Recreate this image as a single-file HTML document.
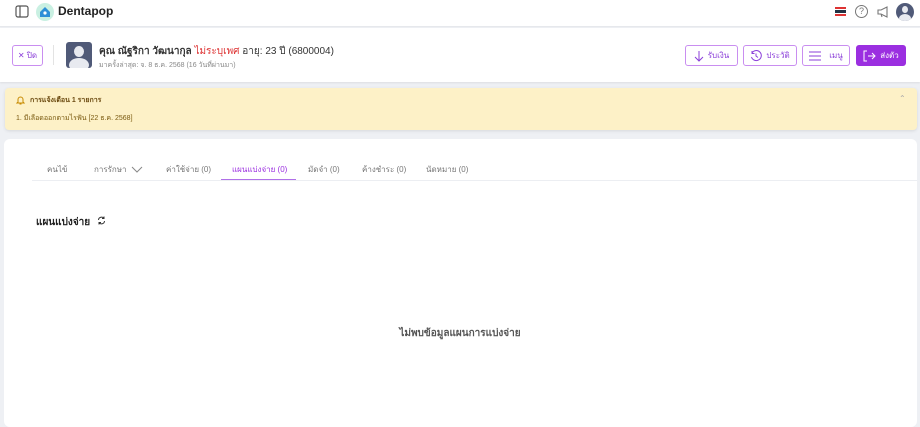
<!DOCTYPE html>
<html><head><meta charset="utf-8"><style>
*{box-sizing:border-box;margin:0;padding:0}
body{width:920px;height:427px;overflow:hidden;background:#eef0f4;font-family:"Liberation Sans","Noto Sans CJK SC",sans-serif;color:#333;position:relative}
.abs{position:absolute}
.top{left:0;top:0;width:920px;height:27px;background:#fff;border-bottom:1px solid #e6e8ec}
.hdr{left:0;top:28px;width:920px;height:54px;background:#fff;box-shadow:0 1px 2px rgba(0,0,0,.08)}
.btn{position:absolute;top:45px;height:21px;border:1px solid #c98ef0;border-radius:3px;background:#fff;font-size:8px;color:#8b3fd9;display:flex;align-items:center;justify-content:center;gap:4px}
.alert{left:5px;top:88px;width:912px;height:42px;background:#fdf1c7;border-radius:4px;box-shadow:0 1px 3px rgba(0,0,0,.1)}
.card{left:4px;top:139px;width:913px;height:288px;background:#fff;border-radius:6px}
.tab{position:absolute;top:163px;font-size:8px;color:#777}
</style></head><body>
<div class="abs top"></div>
<svg class="abs" style="left:15px;top:5px" width="14" height="13"><rect x="1" y="1" width="12" height="11" rx="2" fill="none" stroke="#555" stroke-width="1.2"/><line x1="5" y1="1" x2="5" y2="12" stroke="#555" stroke-width="1.2"/></svg>
<div class="abs" style="left:36px;top:3px;width:18px;height:18px;border-radius:50%;background:#c9f0e2"></div>
<svg class="abs" style="left:39px;top:6px" width="12" height="11"><path d="M1 6L6 1l5 5v5H1z" fill="#2d8fd6"/><circle cx="6" cy="7" r="1.6" fill="#fff"/></svg>
<div class="abs" style="left:58px;top:4px;font-size:12px;font-weight:bold;color:#222">Dentapop</div>
<div class="abs" style="left:835px;top:7px;width:11px;height:9px;background:linear-gradient(#d33 0 22%,#fff 22% 36%,#234 36% 64%,#fff 64% 78%,#d33 78%)"></div>
<div class="abs" style="left:855px;top:5px;width:13px;height:13px;border:1px solid #777;border-radius:50%;font-size:9px;text-align:center;line-height:11px;color:#777">?</div>
<svg class="abs" style="left:877px;top:5px" width="13" height="13"><path d="M1 5h3l6-3v10L4 9H1zM4 9l1 3" fill="none" stroke="#777" stroke-width="1.1"/></svg>
<div class="abs" style="left:896px;top:3px;width:18px;height:18px;border-radius:50%;background:#505a78;overflow:hidden"><div style="position:absolute;left:6px;top:3px;width:6px;height:7px;border-radius:50%;background:#e8eaf0"></div><div style="position:absolute;left:3px;top:11px;width:12px;height:9px;border-radius:50%;background:#e8eaf0"></div></div>

<div class="abs hdr"></div>
<div class="btn" style="left:12px;width:31px;">✕ ปิด</div>
<div class="abs" style="left:53px;top:45px;width:1px;height:20px;background:#e3e3e3"></div>
<div class="abs" style="left:66px;top:42px;width:26px;height:26px;border-radius:3px;background:#505a78;overflow:hidden"><div style="position:absolute;left:8px;top:4px;width:10px;height:11px;border-radius:50%;background:#e8eaf0"></div><div style="position:absolute;left:3px;top:16px;width:20px;height:14px;border-radius:50%;background:#e8eaf0"></div></div>
<div class="abs" style="left:99px;top:44px;font-size:10px;white-space:nowrap"><b>คุณ ณัฐริกา วัฒนากุล</b> <span style="color:#d33">ไม่ระบุเพศ</span> อายุ: 23 ปี (6800004)</div>
<div class="abs" style="left:99px;top:60px;font-size:7px;color:#888;white-space:nowrap">มาครั้งล่าสุด: จ. 8 ธ.ค. 2568 (16 วันที่ผ่านมา)</div>
<div class="btn" style="left:685px;width:53px"><svg width="10" height="12"><path d="M5 1v10M1 7l4 4 4-4" fill="none" stroke="#8b3fd9" stroke-width="1"/></svg>รับเงิน</div>
<div class="btn" style="left:743px;width:54px"><svg width="12" height="12"><path d="M2 3A5 5 0 1 1 1.5 7M2 1v2.5h2.5M6 3.5V6l2 1.5" fill="none" stroke="#8b3fd9" stroke-width="1"/></svg>ประวัติ</div>
<div class="btn" style="left:802px;width:48px;gap:8px"><svg width="12" height="10"><path d="M0 1h12M0 5h12M0 9h12" stroke="#8b3fd9" stroke-width="1"/></svg>เมนู</div>
<div class="btn" style="left:856px;width:50px;background:#9b2fe0;border-color:#9b2fe0;color:#fff"><svg width="13" height="12"><path d="M4 1H1v10h3M5 6h7M9 3l3 3-3 3" fill="none" stroke="#fff" stroke-width="1"/></svg>ส่งตัว</div>

<div class="abs alert"></div>
<svg class="abs" style="left:16px;top:95px" width="9" height="10"><path d="M2 7V4.5a2.5 2.5 0 0 1 5 0V7l1 1H1zM3.5 9h2" fill="none" stroke="#c88a00" stroke-width="1"/></svg>
<div class="abs" style="left:30px;top:95px;font-size:7px;font-weight:bold;color:#6b4a10">การแจ้งเตือน 1 รายการ</div>
<div class="abs" style="left:16px;top:113px;font-size:7px;color:#7a5a10">1. มีเลือดออกตามไรฟัน [22 ธ.ค. 2568]</div>
<div class="abs" style="left:899px;top:94px;font-size:8px;color:#aaa">⌃</div>

<div class="abs card"></div>
<div class="abs" style="left:32px;top:180px;width:885px;height:1px;background:#eceef2"></div>
<div class="tab" style="left:47px">คนไข้</div>
<div class="tab" style="left:94px">การรักษา</div>
<svg class="abs" style="left:131px;top:166px" width="12" height="7"><path d="M1 1l5 5 5-5" fill="none" stroke="#888" stroke-width="1"/></svg>
<div class="tab" style="left:166px">ค่าใช้จ่าย (0)</div>
<div class="tab" style="left:232px;color:#9b2fe0">แผนแบ่งจ่าย (0)</div>
<div class="abs" style="left:221px;top:179px;width:75px;height:1px;background:#b070e8"></div>
<div class="tab" style="left:308px">มัดจำ (0)</div>
<div class="tab" style="left:362px">ค้างชำระ (0)</div>
<div class="tab" style="left:426px">นัดหมาย (0)</div>
<div class="abs" style="left:36px;top:215px;font-size:10px;font-weight:bold;color:#222">แผนแบ่งจ่าย</div>
<svg class="abs" style="left:97px;top:216px" width="9" height="9"><path d="M1.5 4A3 3 0 0 1 7 2.5M7.5 5A3 3 0 0 1 2 6.5M7 0.5v2H5M2 8.5v-2h2" fill="none" stroke="#333" stroke-width="1"/></svg>
<div class="abs" style="left:0;width:920px;top:326px;text-align:center;font-size:10px;font-weight:bold;color:#555">ไม่พบข้อมูลแผนการแบ่งจ่าย</div>
</body></html>
